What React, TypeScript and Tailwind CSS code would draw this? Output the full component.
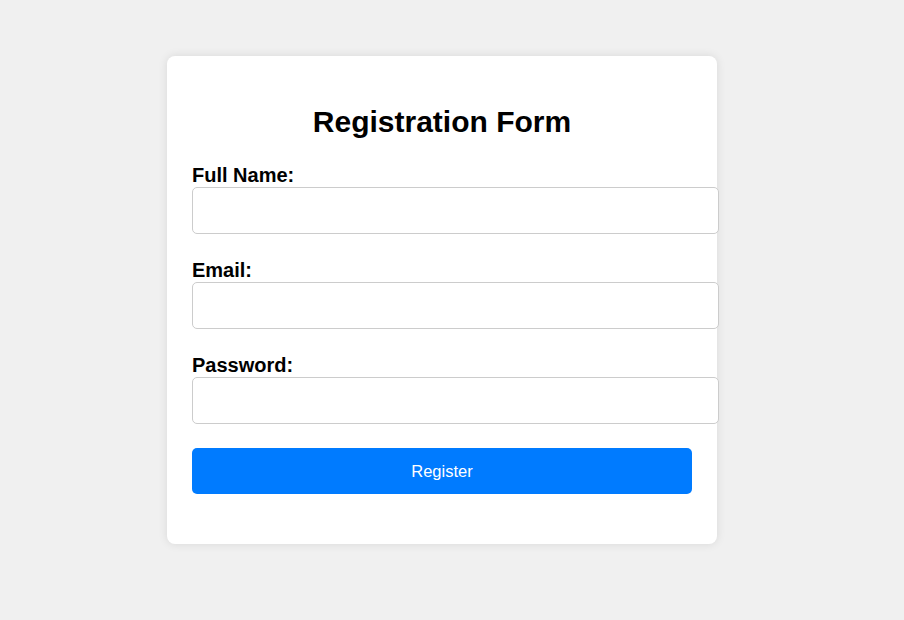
import React from "react";

export default function App() {
  const fields = [
    { label: "Full Name:", type: "text" },
    { label: "Email:", type: "email" },
    { label: "Password:", type: "password" },
  ];
  return (
    <div
      className="w-full h-[620px] bg-[#f0f0f0] flex items-center justify-center pr-[20px] pb-[20px]"
      style={{ fontFamily: '"Liberation Sans", Arial, sans-serif' }}
    >
      <div className="w-[550px] h-[488px] bg-white rounded-[8px] shadow-[0_0_10px_rgba(0,0,0,0.1)] px-[25px] pt-[48px] pb-[50px] flex flex-col">
        <h2 className="text-[30px] leading-[35px] font-bold text-black text-center">
          Registration Form
        </h2>
        <div className="mt-[24px] flex flex-col gap-[24px]">
          {fields.map((f) => (
            <div key={f.label} className="flex flex-col">
              <label className="block text-[20px] leading-[24px] font-bold text-black">
                {f.label}
              </label>
              <input
                type={f.type}
                className="w-[527px] h-[47px] border border-[#cccccc] rounded-[5px] bg-white px-[12px] outline-none"
              />
            </div>
          ))}
          <button className="w-[500px] h-[46px] bg-[#007bff] text-white text-[16.5px] rounded-[5px]">
            Register
          </button>
        </div>
      </div>
    </div>
  );
}
